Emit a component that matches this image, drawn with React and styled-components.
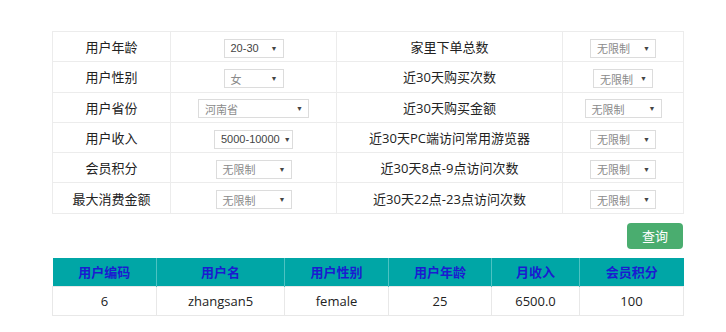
import React from 'react';
import styled, { createGlobalStyle } from 'styled-components';

const GlobalStyle = createGlobalStyle`
  body {
    margin: 0;
    background: #fff;
    font-family: "Open Sans", "Noto Sans CJK SC", sans-serif;
    color: #333;
  }
`;

const filters = [
  [
    { label: '用户年龄', value: '20-30', width: 60, dark: true },
    { label: '家里下单总数', value: '无限制', width: 66 },
  ],
  [
    { label: '用户性别', value: '女', width: 60 },
    { label: '近30天购买次数', value: '无限制', width: 60 },
  ],
  [
    { label: '用户省份', value: '河南省', width: 111 },
    { label: '近30天购买金额', value: '无限制', width: 77 },
  ],
  [
    { label: '用户收入', value: '5000-10000', width: 79, dark: true },
    { label: '近30天PC端访问常用游览器', value: '无限制', width: 66 },
  ],
  [
    { label: '会员积分', value: '无限制', width: 76 },
    { label: '近30天8点-9点访问次数', value: '无限制', width: 66 },
  ],
  [
    { label: '最大消费金额', value: '无限制', width: 76 },
    { label: '近30天22点-23点访问次数', value: '无限制', width: 66 },
  ],
];

const resultCols = [
  { title: '用户编码', width: 104 },
  { title: '用户名', width: 128 },
  { title: '用户性别', width: 104 },
  { title: '用户年龄', width: 103 },
  { title: '月收入', width: 88 },
  { title: '会员积分', width: 104 },
];

const results = [['6', 'zhangsan5', 'female', '25', '6500.0', '100']];

const App = () => {
  return (
    <Page>
      <GlobalStyle />
      <FilterTable>
        <colgroup>
          <col style={{ width: 118 }} />
          <col style={{ width: 166 }} />
          <col style={{ width: 226 }} />
          <col style={{ width: 121 }} />
        </colgroup>
        <tbody>
          {filters.map((row, i) => (
            <tr key={i}>
              {row.map((f) => (
                <React.Fragment key={f.label}>
                  <LabelCell>{f.label}</LabelCell>
                  <FieldCell>
                    <SelectBox $width={f.width} $dark={f.dark}>
                      <span>{f.value}</span>
                      <Arrow>▼</Arrow>
                    </SelectBox>
                  </FieldCell>
                </React.Fragment>
              ))}
            </tr>
          ))}
        </tbody>
      </FilterTable>

      <ActionBar>
        <QueryButton>查询</QueryButton>
      </ActionBar>

      <ResultTable>
        <colgroup>
          {resultCols.map((c) => (
            <col key={c.title} style={{ width: c.width }} />
          ))}
        </colgroup>
        <thead>
          <tr>
            {resultCols.map((c) => (
              <HeadCell key={c.title}>{c.title}</HeadCell>
            ))}
          </tr>
        </thead>
        <tbody>
          {results.map((r, i) => (
            <tr key={i}>
              {r.map((v, j) => (
                <DataCell key={j}>{v}</DataCell>
              ))}
            </tr>
          ))}
        </tbody>
      </ResultTable>
    </Page>
  );
};

const Page = styled.div`
  width: 631px;
  padding: 31px 0 0 52px;
`;

const FilterTable = styled.table`
  width: 631px;
  border-collapse: collapse;
  table-layout: fixed;

  td {
    border: 1px solid #ececec;
    height: 29.3px;
    padding: 0;
    text-align: center;
    vertical-align: middle;
  }
`;

const LabelCell = styled.td`
  font-size: 13px;
  color: #222;
`;

const FieldCell = styled.td``;

const SelectBox = styled.div`
  display: inline-flex;
  align-items: center;
  justify-content: space-between;
  box-sizing: border-box;
  width: ${({ $width }) => $width}px;
  height: 19px;
  padding: 0 5px 0 6px;
  border: 1px solid #dcdcdc;
  background: #fff;
  font-family: "Liberation Sans", "Noto Sans CJK SC", sans-serif;
  font-size: 11px;
  white-space: nowrap;
  color: ${({ $dark }) => ($dark ? '#444' : '#8a8a8a')};
  vertical-align: middle;
`;

const Arrow = styled.span`
  font-size: 7px;
  color: #444;
  margin-left: 4px;
`;

const ActionBar = styled.div`
  display: flex;
  justify-content: flex-end;
  padding: 9px 0 9px;
`;

const QueryButton = styled.button`
  width: 56px;
  height: 26px;
  border: none;
  border-radius: 4px;
  background: #4aad6f;
  color: #fff;
  font-family: "Noto Sans CJK SC", sans-serif;
  font-size: 13px;
  padding: 0;
`;

const ResultTable = styled.table`
  width: 631px;
  border-collapse: collapse;
  table-layout: fixed;
`;

const HeadCell = styled.th`
  height: 28px;
  padding: 0;
  background: #00a6a6;
  border-left: 1px solid #4dc2c2;
  color: #1b1bd0;
  font-size: 13px;
  font-weight: bold;
  text-align: center;

  &:first-child {
    border-left: none;
  }
`;

const DataCell = styled.td`
  height: 28px;
  padding: 0;
  border: 1px solid #e8e8e8;
  font-size: 13px;
  color: #222;
  text-align: center;
`;

export default App;
